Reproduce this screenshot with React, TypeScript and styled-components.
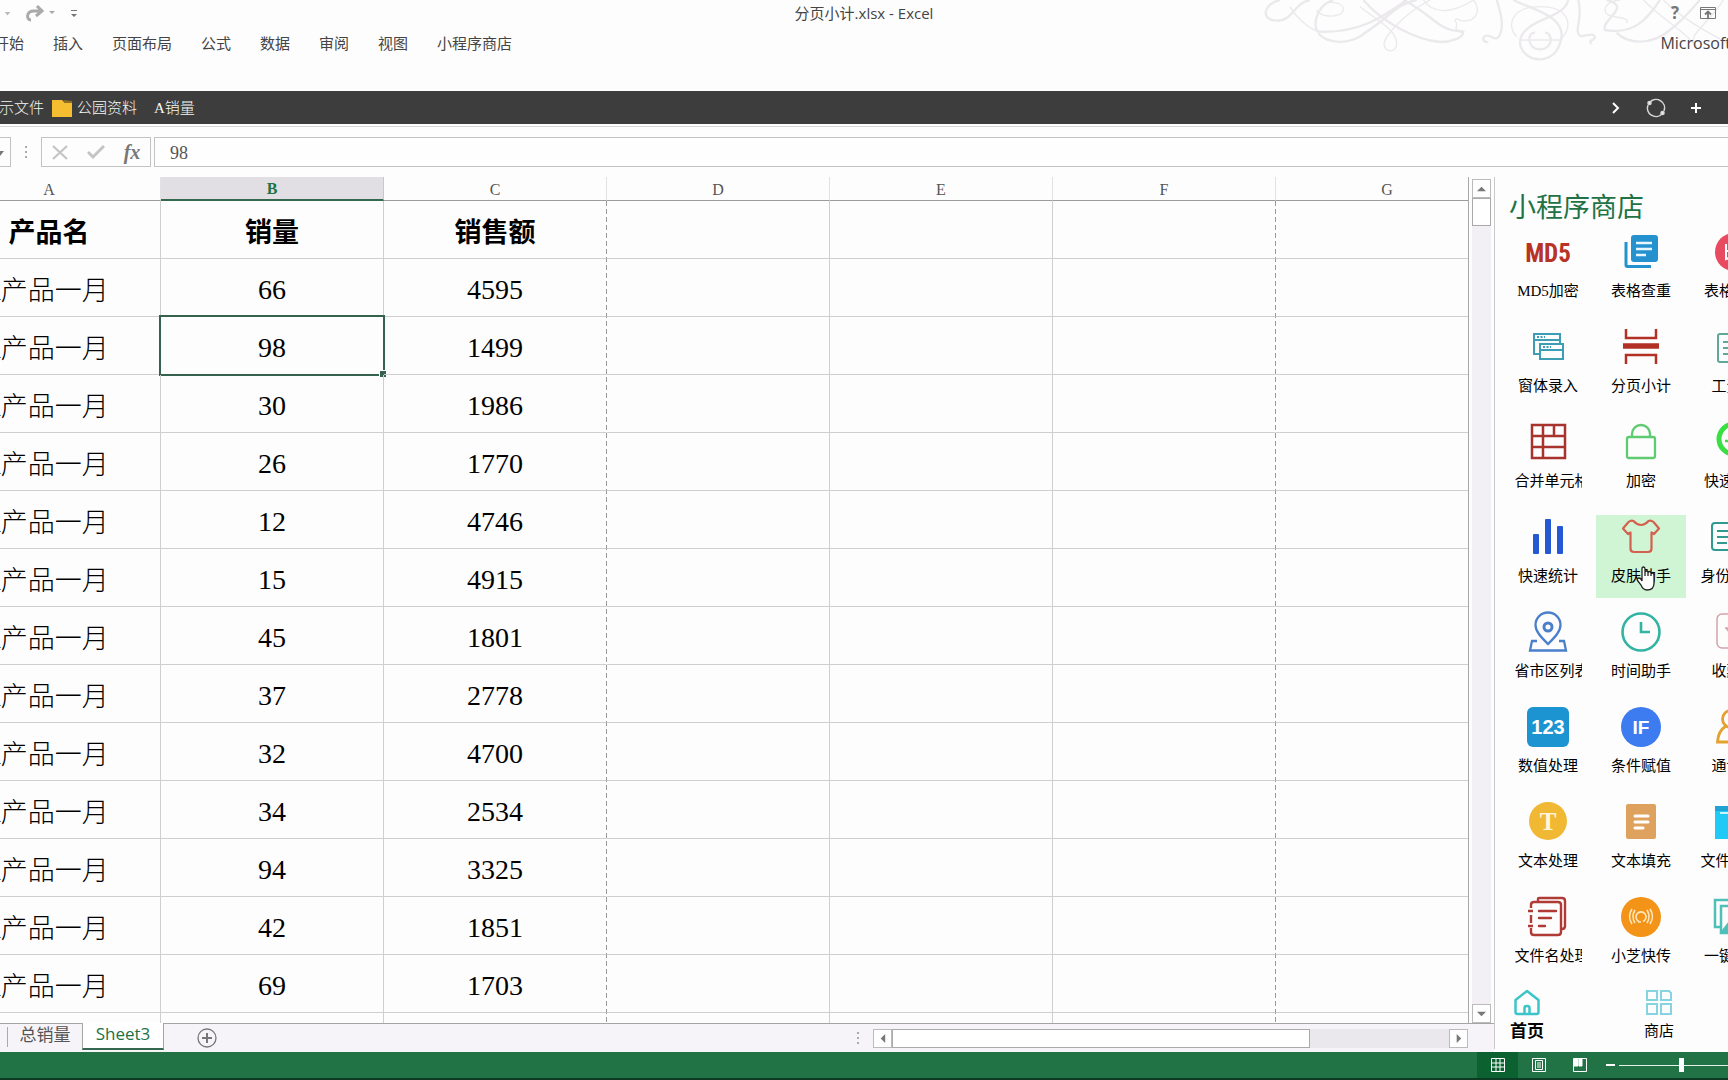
import React from "react";
import styled, { createGlobalStyle, css } from "styled-components";

const UI = `"Open Sans", "Noto Sans CJK SC", sans-serif`;
const SONG = `"Liberation Serif", "Noto Sans CJK SC", serif`;

const Global = createGlobalStyle`
  * { box-sizing: border-box; }
  body { margin: 0; background: #fefdfe; overflow: hidden; font-family: ${UI}; color: #444; }
  button { border: 0; padding: 0; margin: 0; background: none; font: inherit; color: inherit; }
`;

const Window = styled.div`
  display: flex;
  flex-direction: column;
  height: 100vh;
  overflow: hidden;
`;

/* ---------- title bar and ribbon tabs ---------- */

const Header = styled.header`
  position: relative;
  flex: none;
  height: 91px;
`;

const Swirls = styled.svg`
  position: absolute;
  top: 0;
  right: 0;
  width: 478px;
  height: 66px;
  fill: none;
  stroke: #ebe9ec;
`;

const TitleBar = styled.div`
  position: relative;
  display: grid;
  grid-template-columns: 1fr auto 1fr;
  align-items: center;
  height: 26px;
`;

const QuickTools = styled.div`
  display: flex;
  align-items: center;
  gap: 6px;
  padding-left: 4px;
`;

const Title = styled.h1`
  margin: 0;
  font-size: 15px;
  line-height: 24px;
  font-weight: 400;
`;

const WindowTools = styled.div`
  display: flex;
  justify-content: flex-end;
  align-items: center;
  gap: 21px;
  padding-right: 12px;
  font-size: 17px;
  line-height: 20px;
  font-weight: 700;
  color: #777;
`;

const IconButton = styled.button`
  display: flex;
  align-items: center;
  justify-content: center;
`;

const TabRow = styled.nav`
  position: relative;
  display: flex;
  align-items: center;
  gap: 29px;
  height: 34px;
  margin-left: -6px;
  font-size: 15px;
  line-height: 20px;
  white-space: nowrap;
`;

const Account = styled.button`
  margin-left: auto;
  margin-right: -3px;
  font-size: 16px;
`;

/* ---------- dark file bar ---------- */

const FileBar = styled.div`
  flex: none;
  display: flex;
  align-items: center;
  height: 33px;
  background: #3e3d3e;
  color: #f4f8f2;
  font: 300 15px/20px ${SONG};
  white-space: nowrap;
`;

const FileLinks = styled.div`
  flex: 1;
  display: flex;
  align-items: center;
  gap: 17px;
  margin-left: -16px;
`;

const FileLink = styled.button`
  display: flex;
  align-items: center;
  gap: 5px;
`;

const FileGroup = styled.div`
  display: flex;
  gap: 8px;
`;

const FileTools = styled.div`
  display: grid;
  grid-template-columns: repeat(3, 20px);
  gap: 20px;
  padding-right: 22px;
`;

/* ---------- formula bar ---------- */

const FormulaBar = styled.div`
  flex: none;
  display: flex;
  margin-top: 2px;
  padding: 10px 0;
  border-top: 1px solid #d6d6d6;
`;

const NameBox = styled.button`
  width: 11px;
  height: 30px;
  border: solid #c3c3c3;
  border-width: 1px 1px 1px 0;
`;

const Grip = styled.div`
  display: flex;
  flex-direction: column;
  align-items: center;
  justify-content: center;
  gap: 3px;
  width: 30px;
  i { width: 2px; height: 2px; background: #aaa; }
`;

const FormulaTools = styled.div`
  display: grid;
  grid-template-columns: repeat(3, 1fr);
  width: 110px;
  height: 30px;
  border: 1px solid #c3c3c3;
`;

const Fx = styled.span`
  font: italic 700 20px/24px "Liberation Serif", serif;
  color: #777;
`;

const FormulaInput = styled.input`
  flex: 1;
  min-width: 0;
  height: 30px;
  margin-left: 3px;
  padding: 2px 15px 0;
  border: 1px solid #c3c3c3;
  border-right: 0;
  background: #fefefe;
  font: 18px ${SONG};
  color: #555;
  outline: 0;
`;

/* ---------- workbook ---------- */

const Body = styled.div`
  flex: 1;
  min-height: 0;
  display: flex;
`;

const Workbook = styled.main`
  flex: 1;
  min-width: 0;
  display: flex;
  flex-direction: column;
`;

const SheetRow = styled.div`
  flex: 1;
  min-height: 0;
  display: flex;
`;

const SheetClip = styled.div`
  flex: 1;
  min-width: 0;
  overflow: hidden;
`;

const Table = styled.table`
  table-layout: fixed;
  width: 1561px;
  margin-left: -62px;
  border-collapse: separate;
  border-spacing: 0;
`;

const Col = styled.col<{ $break?: boolean }>`
  width: 223px;
  ${(p) =>
    p.$break &&
    css`
      background: repeating-linear-gradient(#999 0 5px, transparent 5px 8px) right / 1px 100% no-repeat;
    `}
`;

const ColHead = styled.th<{ $active?: boolean }>`
  height: 24px;
  padding: 3px 0 0;
  border-right: 1px solid #e2e2e2;
  border-bottom: 1px solid #9c9c9c;
  background: #fefdfe;
  font: 400 16px/20px ${SONG};
  color: #555;
  ${(p) =>
    p.$active &&
    css`
      padding-top: 2px;
      border-right-color: #c8c8c8;
      border-bottom: 2px solid #35694f;
      background: #e1dfe3;
      font-weight: 700;
      color: #217346;
    `}
`;

type CellKind = "head" | "label" | "number";

const Cell = styled.td<{ $break?: boolean; $kind: CellKind }>`
  position: relative;
  height: 58px;
  padding: ${(p) => ({ head: "7px 0 0", label: "7px 8px 0 0", number: "5px 0 0" })[p.$kind]};
  border-right: 1px solid ${(p) => (p.$break ? "transparent" : "#cfcfcf")};
  border-bottom: 1px solid #cfcfcf;
  font-family: ${SONG};
  font-weight: ${(p) => (p.$kind === "head" ? 700 : 300)};
  font-size: ${(p) => (p.$kind === "number" ? "28px" : "27px")};
  line-height: 36px;
  color: #000;
  text-align: center;
  white-space: nowrap;
`;

const Selection = styled.div`
  position: absolute;
  inset: -2px;
  border: 2px solid #35614f;
  &::after {
    content: "";
    position: absolute;
    right: -3px;
    bottom: -3px;
    width: 6px;
    height: 6px;
    background: #35614f;
    border: solid #fff;
    border-width: 1px 0 0 1px;
  }
`;

const VScroll = styled.div`
  flex: none;
  display: flex;
  flex-direction: column;
  width: 26px;
  padding: 2px 3px 0;
  border-left: 1px solid #a8a8a8;
`;

const ScrollButton = styled.button`
  flex: none;
  display: flex;
  align-items: center;
  justify-content: center;
  width: 19px;
  height: 19px;
  border: 1px solid #bbb;
  background: #fefefe;
`;

const VTrack = styled.div`
  flex: 1;
  width: 19px;
  background: #f2f0f4;
`;

const VThumb = styled.div`
  height: 28px;
  border: 1px solid #aaa;
  background: #fff;
`;

const SheetBar = styled.div`
  flex: none;
  display: flex;
  height: 29px;
  padding-right: 26px;
  border-top: 1px solid #a5a5a5;
  background: #f6f4f9;
`;

const SheetTabs = styled.div`
  flex: 1;
  display: flex;
  align-items: flex-start;
  padding-left: 7px;
`;

const SheetTab = styled.button<{ $active?: boolean }>`
  height: 20px;
  width: 75px;
  margin-top: 3px;
  padding-bottom: 4px;
  border-left: 1px solid #aaa;
  font: 17px/16px ${UI};
  color: #555;
  ${(p) =>
    p.$active &&
    css`
      width: 82px;
      height: 27px;
      margin-top: -1px;
      border: solid #a5a5a5;
      border-width: 0 1px 2px;
      border-bottom-color: #35694f;
      background: #fff;
      color: #217346;
    `}
`;

const AddSheet = styled(IconButton)`
  margin: 4px 0 0 33px;
`;

const HScroll = styled.div`
  display: flex;
  align-items: center;
  width: 595px;
`;

const HTrack = styled.div`
  flex: 1;
  height: 19px;
  background: #eae8ec;
`;

const HThumb = styled.div`
  width: 75%;
  height: 19px;
  border: 1px solid #aaa;
  background: #fff;
`;

/* ---------- task pane ---------- */

const Pane = styled.aside`
  flex: none;
  width: 234px;
  margin-bottom: 3px;
  padding-top: 12px;
  border-left: 1px solid #c9c9c9;
  overflow: hidden;
`;

const PaneTitle = styled.h2`
  margin: 0 0 5px 14px;
  font: 400 27px/36px ${UI};
  color: #217346;
`;

const Tiles = styled.div`
  display: grid;
  grid-template-columns: repeat(3, 90px);
  grid-auto-rows: 83px;
  gap: 12px 3px;
  padding-left: 8px;
`;

const Tile = styled.button<{ $hover?: boolean }>`
  position: relative;
  display: flex;
  flex-direction: column;
  align-items: center;
  gap: 9px;
  padding-top: 2px;
  background: ${(p) => (p.$hover ? "#cff5d5" : "none")};
`;

const TileIcon = styled.svg`
  width: 40px;
  height: 40px;
  overflow: visible;
  fill: none;
`;

const TileLabel = styled.span`
  width: 67px;
  overflow: hidden;
  font: 400 15px/20px ${SONG};
  color: #000;
  white-space: nowrap;
`;

const Pointer = styled.svg`
  position: absolute;
  left: 40px;
  top: 51px;
  width: 20px;
  height: 25px;
`;

const PaneNav = styled.nav`
  display: flex;
  gap: 66px;
  margin-top: 11px;
  margin-left: -1px;
`;

const NavButton = styled.button<{ $active?: boolean }>`
  display: flex;
  flex-direction: column;
  align-items: center;
  gap: 5px;
  width: 66px;
  font: ${(p) => (p.$active ? "700 17px/22px" : "400 15px/20px")} ${SONG};
  color: #000;
`;

/* ---------- status bar ---------- */

const StatusBar = styled.footer`
  flex: none;
  display: flex;
  justify-content: flex-end;
  align-items: center;
  height: 28px;
  border-bottom: 2px solid #0c3a22;
  background: #217245;
`;

const ViewButton = styled(IconButton)<{ $active?: boolean }>`
  width: 41px;
  height: 26px;
  background: ${(p) => (p.$active ? "#0b6130" : "none")};
`;

const ZoomOut = styled(IconButton)`
  width: 12px;
  height: 26px;
  margin: 0 3px 0 4px;
`;

const Zoom = styled.input`
  flex: none;
  appearance: none;
  width: 124px;
  height: 16px;
  margin: 0 -15px 0 0;
  background: linear-gradient(#e6f0ea, #e6f0ea) center / 100% 1px no-repeat;
  &::-webkit-slider-thumb {
    appearance: none;
    width: 5px;
    height: 14px;
    background: #fff;
  }
`;

const sales: [number, number][] = [
  [66, 4595], [98, 1499], [30, 1986], [26, 1770], [12, 4746], [15, 4915], [45, 1801],
  [37, 2778], [32, 4700], [34, 2534], [94, 3325], [42, 1851], [69, 1703],
];
const columns = ["A", "B", "C", "D", "E", "F", "G"];
const breaks = ["C", "F"];

const cellKind = (row: number, column: number): CellKind =>
  row === 0 ? "head" : column === 0 ? "label" : "number";

const tiles: { label: string; icon: React.ReactNode }[] = [
  {
    label: "MD5加密",
    icon: (
      <text x="20" y="30" textAnchor="middle" fill="#b83226" fontFamily="'Liberation Sans Narrow','Roboto Condensed',Roboto,sans-serif" fontWeight="700" fontSize="25">MD5</text>
    ),
  },
  {
    label: "表格查重",
    icon: (
      <g>
        <rect x="10" y="3" width="27" height="27" rx="3" fill="#2592cf" />
        <path d="M5 10v23a1.500 1.500 0 0 0 1.500 1.500H30" stroke="#2592cf" strokeWidth="3" />
        <path d="M15 11h16M15 17h16M15 23h10" stroke="#e8f6ff" strokeWidth="2.500" />
      </g>
    ),
  },
  {
    label: "表格比对",
    icon: (
      <g>
        <circle cx="20" cy="20" r="19" fill="#e84a60" />
        <path d="M12 12v15l6-2M12 19h6M23 12v15h6M29 17l-6 3" stroke="#fff" strokeWidth="2" />
      </g>
    ),
  },
  {
    label: "窗体录入",
    icon: (
      <g stroke="#3c9db4" strokeWidth="2">
        <path d="M11 27H6V7h26v9M6 13h26" />
        <rect x="12" y="17" width="23" height="15" />
        <path d="M12 23h23" />
        <path d="M9 10h8M15 20h8" strokeDasharray="2 1.500" />
      </g>
    ),
  },
  {
    label: "分页小计",
    icon: (
      <g stroke="#b23024" strokeWidth="2.500">
        <path d="M5 2v9h30V2M5 37v-9h30v9" />
        <path d="M2 19h36" strokeWidth="5.500" />
      </g>
    ),
  },
  {
    label: "工资条",
    icon: (
      <g stroke="#5fa898" strokeWidth="2">
        <rect x="4" y="7" width="32" height="28" rx="2" />
        <path d="M9 15h22M9 21h22M9 27h22" />
      </g>
    ),
  },
  {
    label: "合并单元格",
    icon: (
      <path d="M4 3h33v33H4zM15 3v33M4 14h33M4 25h33M26 3v11" stroke="#a8322c" strokeWidth="2.500" />
    ),
  },
  {
    label: "加密",
    icon: (
      <g stroke="#5fcb70" strokeWidth="2.300">
        <rect x="6" y="15" width="28" height="21" rx="2" />
        <path d="M11 15v-3a9 9 0 0 1 18 0v3" />
      </g>
    ),
  },
  {
    label: "快速定位",
    icon: (
      <g stroke="#3adf42">
        <circle cx="20" cy="17" r="15" strokeWidth="5" />
        <path d="M11 19h5l4 4 9-9" strokeWidth="2.500" />
      </g>
    ),
  },
  {
    label: "快速统计",
    icon: (
      <g fill="#2459d3">
        <rect x="5" y="17" width="6" height="20" rx="1" />
        <rect x="17" y="2" width="6" height="35" rx="1" />
        <rect x="29" y="9" width="6" height="28" rx="1" />
      </g>
    ),
  },
  {
    label: "皮肤助手",
    icon: (
      <path
        d="M12.500 4 Q20 12 27.500 4 Q30 3 32.500 5 L38 11.500 L33 17 L30.500 15.500 V31.500 Q30.500 35 27 35 H13 Q9.500 35 9.500 31.500 V15.500 L7 17 L2 11.500 L7.500 5 Q10 3 12.500 4Z"
        stroke="#d4604f"
        strokeWidth="2.200"
        strokeLinejoin="round"
      />
    ),
  },
  {
    label: "身份证信息",
    icon: (
      <g stroke="#2f9a8f" strokeWidth="2">
        <rect x="-2" y="6" width="44" height="27" rx="3" />
        <path d="M3 14h14M3 20h12M3 26h10M24 26h12" />
        <circle cx="30" cy="16" r="4" />
      </g>
    ),
  },
  {
    label: "省市区列表",
    icon: (
      <g stroke="#4a7fcb" strokeWidth="2.300">
        <path d="M20 32C14 26 7.500 20 7.500 13a12.500 12.500 0 0 1 25 0C32.500 20 26 26 20 32Z" />
        <circle cx="20" cy="15" r="4" strokeWidth="3" />
        <path d="M9 29H4L2 38.500h36L36 29h-5" />
      </g>
    ),
  },
  {
    label: "时间助手",
    icon: (
      <g stroke="#32b3a4" strokeWidth="2.600">
        <circle cx="20" cy="20" r="18.500" />
        <path d="M20 10v10h9" />
      </g>
    ),
  },
  {
    label: "收藏夹",
    icon: (
      <g stroke="#d3a3aa" strokeWidth="1.500">
        <rect x="3" y="2" width="34" height="34" rx="5" />
        <path d="M11 16h18M12 16l8 10 8-10" />
      </g>
    ),
  },
  {
    label: "数值处理",
    icon: (
      <g>
        <rect x="-1" y="0" width="42" height="40" rx="6" fill="#1d94d2" />
        <text x="20" y="27" textAnchor="middle" fill="#fff" fontFamily="'Liberation Sans',sans-serif" fontWeight="700" fontSize="20">123</text>
      </g>
    ),
  },
  {
    label: "条件赋值",
    icon: (
      <g>
        <circle cx="20" cy="20" r="20" fill="#3c7bf0" />
        <text x="20" y="27" textAnchor="middle" fill="#fff" fontFamily="'Liberation Sans',sans-serif" fontWeight="700" fontSize="19">IF</text>
      </g>
    ),
  },
  {
    label: "通讯录",
    icon: (
      <g stroke="#e3a12e" strokeWidth="2.800">
        <circle cx="17" cy="12" r="8.500" />
        <path d="M12 19Q4 24 3.500 35H30.500Q30 24 22 19" />
      </g>
    ),
  },
  {
    label: "文本处理",
    icon: (
      <g>
        <circle cx="20" cy="19" r="19" fill="#f1b833" />
        <text x="20" y="28" textAnchor="middle" fill="#fff6dc" fontFamily="'Liberation Serif',serif" fontWeight="700" fontSize="25">T</text>
      </g>
    ),
  },
  {
    label: "文本填充",
    icon: (
      <g>
        <rect x="5" y="2" width="30" height="35" rx="2" fill="#dfa25e" />
        <path d="M14 14h13M14 20h13M14 26h8" stroke="#fff" strokeWidth="3" strokeLinecap="round" />
      </g>
    ),
  },
  {
    label: "文件夹处理",
    icon: (
      <g>
        <path d="M1 4h16l4 5h18v28H1z" fill="#1fcaf6" />
        <path d="M1 4h16l4 5H1z" fill="#1ea3d4" />
        <path d="M6 11h24" stroke="#c9f5ff" strokeWidth="2" />
      </g>
    ),
  },
  {
    label: "文件名处理",
    icon: (
      <g stroke="#b03a34" strokeWidth="2.400">
        <path d="M10 4V2q0-1 1-1h23q3 0 3 3v25q0 3-3 3" />
        <path d="M3 11V8q0-3 3-3h24q3 0 3 3v27q0 3-3 3H6q-3 0-3-3v-4M3 18v8M0 14h5M0 29h5" />
        <path d="M11 14h17M11 21h12M11 29h6" strokeLinecap="round" />
      </g>
    ),
  },
  {
    label: "小芝快传",
    icon: (
      <g>
        <circle cx="20" cy="20" r="20" fill="#f39418" />
        <g stroke="#ffe7bd" strokeWidth="1.600">
          <path d="M18 24.500a5 5 0 1 1 4 0M17 25h3" />
          <path d="M14 13q-4 6.500 0 13M26 13q4 6.500 0 13M11 12q-5 7.500 0 15M29 12q5 7.500 0 15" />
        </g>
      </g>
    ),
  },
  {
    label: "一键导图",
    icon: (
      <g stroke="#4fc0b8" strokeWidth="2.500">
        <path d="M6 30H1V3h28v5" />
        <rect x="7" y="9" width="29" height="27" />
        <path d="M8 35L18 22l8 9 4-4 6 8z" fill="#4fc0b8" />
      </g>
    ),
  },
];

function Arrow({ d, size = 9, color = "#777" }: { d: string; size?: number; color?: string }) {
  return (
    <svg width={size} height={size} viewBox="0 0 10 10" aria-hidden="true">
      <path d={d} fill={color} />
    </svg>
  );
}

const GripDots = () => (
  <Grip>
    <i />
    <i />
    <i />
  </Grip>
);

export default function App() {
  return (
    <Window>
      <Global />
      <Header>
        <Swirls viewBox="0 0 1434 198" aria-hidden="true">
          <g strokeWidth="7">
            <path d="M90 0C40 10 30 62 80 62C130 62 130 10 180 0" />
            <path d="M250 0C190 20 190 90 205 95C330 100 400 50 470 0" />
            <path d="M205 100C230 130 300 140 350 95C420 50 440 10 500 0" />
            <path d="M340 0C400 70 500 120 570 126C600 126 640 115 640 95C620 90 600 100 550 60C500 20 480 10 460 0" />
            <path d="M740 0C760 60 760 90 745 112C730 125 725 100 705 108C695 115 700 128 715 126" />
            <path d="M790 0C850 30 960 50 930 130C910 195 830 190 812 140C800 95 850 70 900 50C940 30 950 20 955 0" />
            <path d="M855 98C830 95 830 148 870 148C910 148 910 98 885 98" />
            <path d="M985 0C1000 60 970 90 990 108C1010 110 1030 95 1035 112C1030 125 1012 118 1025 132" />
            <path d="M1100 98C1130 130 1200 140 1260 90C1310 50 1330 20 1350 0" />
            <path d="M1070 0C1150 20 1050 60 1065 90C1150 105 1190 60 1230 0" />
          </g>
          <g strokeWidth="4">
            <path d="M200 30C210 55 280 55 280 28C280 5 230 0 220 20" />
            <path d="M120 20C150 70 190 90 205 95M540 0C450 50 405 110 402 130C402 160 440 160 440 130C440 90 380 60 330 20" />
            <path d="M640 98C600 90 630 75 617 65C610 55 625 55 630 62C690 70 690 20 670 0C640 20 560 60 520 0" />
            <path d="M870 20C780 20 770 80 800 110M870 20C960 20 970 80 935 115M810 120H935" />
            <path d="M1130 70C1140 45 1090 60 1068 40C1055 15 1090 0 1110 0M1180 0C1250 70 1330 110 1340 150M1240 0C1300 60 1380 100 1434 130M1420 0C1380 70 1300 110 1340 140" />
          </g>
        </Swirls>
        <TitleBar>
          <QuickTools>
            <Arrow d="M1 3h8L5 8z" size={7} color="#bbb" />
            <IconButton aria-label="重做">
              <svg width="38" height="18" viewBox="0 0 38 18" fill="none">
                <path d="M12 15C7 15 7 6 15 6h6M18 1l5 5-6 5" transform="translate(2 1)" stroke="#aaa" strokeWidth="3" />
                <path d="M32 7h6l-3 3z" fill="#aaa" />
              </svg>
            </IconButton>
            <IconButton aria-label="自定义快速访问工具栏">
              <svg width="26" height="12" viewBox="0 0 26 12">
                <path d="M10 3h6v1h-6zM10 7h6l-3 3z" fill="#777" />
              </svg>
            </IconButton>
          </QuickTools>
          <Title>分页小计.xlsx - Excel</Title>
          <WindowTools>
            <IconButton aria-label="帮助">?</IconButton>
            <IconButton aria-label="功能区显示选项">
              <svg width="16" height="12" viewBox="0 0 16 12" fill="none" stroke="#777">
                <path d="M.5.5h15v11H.5zM.5 2.500h15" />
                <path d="M8 11V5M5 7.500L8 4.500l3 3" strokeWidth="1.800" />
              </svg>
            </IconButton>
          </WindowTools>
        </TitleBar>
        <TabRow>
          {["开始", "插入", "页面布局", "公式", "数据", "审阅", "视图", "小程序商店"].map((t) => (
            <button key={t}>{t}</button>
          ))}
          <Account>Microsoft</Account>
        </TabRow>
      </Header>

      <FileBar>
        <FileLinks>
          <FileGroup>
            <FileLink>演示文件</FileLink>
            <FileLink>
              <svg width="20" height="18" viewBox="0 0 20 18" aria-hidden="true">
                <path d="M0 1h10l3 3h7v14H0z" fill="#f5bd30" />
                <path d="M11 1l2 3h7V2z" fill="#8d6f2a" />
              </svg>
              公园资料
            </FileLink>
          </FileGroup>
          <FileLink>A销量</FileLink>
        </FileLinks>
        <FileTools>
          <IconButton aria-label="更多">
            <svg width="12" height="12" viewBox="0 0 12 12" fill="none" stroke="#fff" strokeWidth="2">
              <path d="M3 1l5 5-5 5" />
            </svg>
          </IconButton>
          <IconButton aria-label="刷新">
            <svg width="20" height="20" viewBox="0 0 20 20" fill="none" stroke="#d5d5d5" strokeWidth="1.600">
              <path d="M4 4a8.500 8.500 0 0 1 14 9M16 16A8.500 8.500 0 0 1 2 7" />
              <circle cx="3.500" cy="5" r="1.500" fill="#fff" />
              <circle cx="16.500" cy="15" r="1.500" fill="#fff" />
            </svg>
          </IconButton>
          <IconButton aria-label="添加">
            <svg width="12" height="12" viewBox="0 0 12 12" fill="none" stroke="#fff" strokeWidth="2">
              <path d="M1 6h10M6 1v10" />
            </svg>
          </IconButton>
        </FileTools>
      </FileBar>

      <FormulaBar>
        <NameBox aria-label="名称框">
          <Arrow d="M-4 3h8L0 8z" size={10} />
        </NameBox>
        <GripDots />
        <FormulaTools>
          <IconButton aria-label="取消">
            <svg width="16" height="16" viewBox="0 0 16 16" stroke="#c4c4c4" strokeWidth="2.200">
              <path d="M1 2l14 13M15 2L1 15" />
            </svg>
          </IconButton>
          <IconButton aria-label="输入">
            <svg width="18" height="16" viewBox="0 0 18 16" fill="none" stroke="#c4c4c4" strokeWidth="3">
              <path d="M1 8l5 5L17 2" />
            </svg>
          </IconButton>
          <IconButton aria-label="插入函数">
            <Fx>fx</Fx>
          </IconButton>
        </FormulaTools>
        <FormulaInput aria-label="编辑栏" defaultValue="98" />
      </FormulaBar>

      <Body>
        <Workbook>
          <SheetRow>
            <SheetClip>
              <Table>
                <colgroup>
                  {columns.map((c) => (
                    <Col key={c} $break={breaks.includes(c)} />
                  ))}
                </colgroup>
                <thead>
                  <tr>
                    {columns.map((c) => (
                      <ColHead key={c} scope="col" $active={c === "B"}>
                        {c}
                      </ColHead>
                    ))}
                  </tr>
                </thead>
                <tbody>
                  {[["产品名", "销量", "销售额"], ...sales.map(([n, v]) => ["A产品一月", n, v]), []].map((row, r) => (
                    <tr key={r}>
                      {columns.map((c, i) => (
                        <Cell key={c} $kind={cellKind(r, i)} $break={breaks.includes(c)}>
                          {row[i]}
                          {r === 2 && c === "B" && <Selection />}
                        </Cell>
                      ))}
                    </tr>
                  ))}
                </tbody>
              </Table>
            </SheetClip>
            <VScroll>
              <ScrollButton aria-label="向上滚动">
                <Arrow d="M0 8h10L5 3z" />
              </ScrollButton>
              <VTrack>
                <VThumb />
              </VTrack>
              <ScrollButton aria-label="向下滚动">
                <Arrow d="M0 3h10L5 8z" />
              </ScrollButton>
            </VScroll>
          </SheetRow>
          <SheetBar>
            <SheetTabs>
              <SheetTab>总销量</SheetTab>
              <SheetTab $active>Sheet3</SheetTab>
              <AddSheet aria-label="新工作表">
                <svg width="20" height="20" viewBox="0 0 20 20" fill="none" stroke="#777">
                  <circle cx="10" cy="10" r="9" strokeWidth="1.300" />
                  <path d="M5 10h10M10 5v10" strokeWidth="2" />
                </svg>
              </AddSheet>
            </SheetTabs>
            <GripDots />
            <HScroll>
              <ScrollButton aria-label="向左滚动">
                <Arrow d="M8 0v10L3 5z" />
              </ScrollButton>
              <HTrack>
                <HThumb />
              </HTrack>
              <ScrollButton aria-label="向右滚动">
                <Arrow d="M3 0v10l5-5z" />
              </ScrollButton>
            </HScroll>
          </SheetBar>
        </Workbook>

        <Pane>
          <PaneTitle>小程序商店</PaneTitle>
          <Tiles>
            {tiles.map((t) => (
              <Tile key={t.label} $hover={t.label === "皮肤助手"}>
                <TileIcon viewBox="0 0 40 40" aria-hidden="true">
                  {t.icon}
                </TileIcon>
                <TileLabel>{t.label}</TileLabel>
                {t.label === "皮肤助手" && (
                  <Pointer viewBox="0 0 20 25" aria-hidden="true">
                    <path
                      d="M6 15V3q0-2 1.500-2T9 3v7V6.500q0-1.500 1.500-1.500T12 6.500V10 7q0-1.500 1.500-1.500T15 7v3-1.500q0-1.300 1.300-1.300T18 9v8q0 7-7 7-4 0-6-5l-3.500-4.500Q1 12 3 12t3 3Z"
                      fill="#fff"
                      stroke="#222"
                      strokeWidth="1.300"
                    />
                  </Pointer>
                )}
              </Tile>
            ))}
          </Tiles>
          <PaneNav>
            <NavButton $active>
              <svg width="28" height="27" viewBox="0 0 28 27" fill="none" stroke="#3cc4c8" strokeWidth="2.500" aria-hidden="true">
                <path d="M2.500 11L14 2l11.500 9v12q0 2-2 2h-19q-2 0-2-2z" strokeLinejoin="round" />
                <path d="M11.500 25v-6q0-2 2.500-2t2.500 2v6" />
              </svg>
              首页
            </NavButton>
            <NavButton>
              <svg width="28" height="27" viewBox="0 0 28 27" fill="none" stroke="#86d3e2" strokeWidth="2" aria-hidden="true">
                <path d="M2 2h10v9H2zM16 2h8l2 2v7H16zM2 15h10v10H2zM16 15h10v10H16z" />
              </svg>
              商店
            </NavButton>
          </PaneNav>
        </Pane>
      </Body>

      <StatusBar>
        <ViewButton $active aria-label="普通">
          <svg width="14" height="14" viewBox="0 0 14 14" fill="none" stroke="#fff">
            <path d="M.5.5h13v13H.5zM5 .5v13M9 .5v13M.5 5h13M.5 9h13" />
          </svg>
        </ViewButton>
        <ViewButton aria-label="页面布局">
          <svg width="14" height="14" viewBox="0 0 14 14" fill="none" stroke="#fff">
            <path d="M.5.5h13v13H.5zM3.500 2.500h7v9h-7zM5 5h4M5 7h4M5 9h4" />
          </svg>
        </ViewButton>
        <ViewButton aria-label="分页预览">
          <svg width="14" height="14" viewBox="0 0 14 14" fill="none" stroke="#fff">
            <path d="M.5.5h13v13H.5z" />
            <path d="M1 1h4v7H1zM6 1h3v7H6z" fill="#fff" />
          </svg>
        </ViewButton>
        <ZoomOut aria-label="缩小">
          <svg width="9" height="2" viewBox="0 0 9 2">
            <path d="M0 0h9v2H0z" fill="#fff" />
          </svg>
        </ZoomOut>
        <Zoom type="range" aria-label="显示比例" defaultValue={50} />
      </StatusBar>
    </Window>
  );
}
